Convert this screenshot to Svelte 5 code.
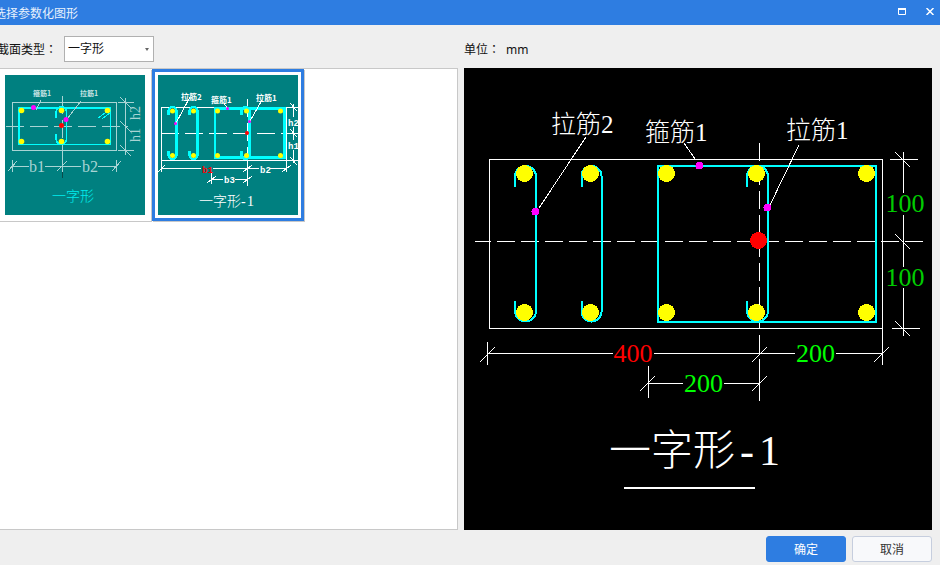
<script lang="ts">
  const balls = [524.5, 590.5, 666.5, 756.5, 866.5];
  const hooks = [[515, 536], [581.5, 601.5], [747, 768]];

  // dimension lines, in page pixels
  const dims = [
    [487.5, 342, 487.5, 365], [480, 362, 495, 347], [487, 353.5, 613, 353.5], [654, 353.5, 759, 353.5],
    [752, 362, 767, 347], [759, 353.5, 795, 353.5], [836, 353.5, 882, 353.5], [874, 362, 889, 347],
    [882.5, 328, 882.5, 365], [759.5, 359, 759.5, 401],
    [648.5, 366, 648.5, 398], [640, 391, 655, 376], [648, 383.5, 683, 383.5], [724, 383.5, 759, 383.5], [752, 391, 767, 376],
    [890, 159.5, 918, 159.5], [892, 328.5, 920, 328.5], [895, 152, 910, 167], [895, 234, 910, 249], [895, 321, 910, 336],
    [903.5, 152, 903.5, 193], [903.5, 215, 903.5, 267], [903.5, 288, 903.5, 336],
    [539, 208, 586, 137], [695, 159, 684, 143], [770, 205, 799, 145]
  ];

  const t1Dims = [
    [12.5, 160, 12.5, 172], [62.5, 160, 62.5, 172], [116.5, 160, 116.5, 172],
    [8, 171, 17, 161], [57, 171, 67, 161], [112, 171, 121, 161],
    [13, 166.5, 29, 166.5], [45, 166.5, 81, 166.5], [98, 166.5, 116, 166.5],
    [118, 102.5, 134, 102.5], [118, 150.5, 134, 150.5], [120, 97, 131, 108], [120, 121, 131, 132], [120, 145, 131, 156],
    [125.5, 98, 125.5, 155], [36, 110, 41, 100], [67, 119, 81, 101]
  ];

  const t2Dims = [
    [161.5, 160, 161.5, 172], [247.5, 160, 247.5, 186], [286.5, 160, 286.5, 172], [211.5, 172, 211.5, 184],
    [158, 172, 165, 165], [243, 172, 252, 165], [282, 172, 291, 165], [207, 183, 216, 176], [243, 183, 252, 176],
    [161, 168.5, 201, 168.5], [213, 168.5, 259, 168.5], [270, 168.5, 286, 168.5],
    [212, 179.5, 223, 179.5], [235, 179.5, 247, 179.5],
    [287, 107.5, 298, 107.5], [287, 160.5, 298, 160.5], [290, 103, 297, 111], [290, 129, 297, 137], [290, 157, 297, 165],
    [293.5, 104, 293.5, 117], [293.5, 127, 293.5, 140], [293.5, 150, 293.5, 163],
    [176, 123, 190, 97], [227, 108, 224, 103], [250, 121, 262, 100]
  ];
</script>

<div class="dialog">
  <header class="titlebar">
    <span class="title">选择参数化图形</span>
    <svg class="win-icon" viewBox="0 0 8 7" width="8" height="7"><path d="M.5 1.5h7v5h-7z" fill="none" stroke="#fff" /><path d="M0 0h8v2H0z" fill="#fff" /></svg>
    <svg class="win-icon" viewBox="0 0 8 7" width="8" height="7"><path d="M.5 0l7 7M7.5 0l-7 7" stroke="#fff" stroke-width="1.5" /></svg>
  </header>

  <div class="toolbar">
    <div class="type-field">
      <span>截面类型<span class="colon">：</span></span>
      <div class="select">一字形</div>
    </div>
    <div class="unit"><span>单位<span class="colon">：</span></span><span>mm</span></div>
  </div>

  <main class="body">
    <section class="list">
      <div class="cards">
        <div class="card">
          <svg class="thumb" viewBox="5 75 140 140" width="140" height="140" shape-rendering="crispEdges">
            <rect x="5" y="75" width="140" height="140" fill="#008080" />
            <rect x="12.5" y="102.5" width="104" height="48" fill="none" stroke="#a8d4d4" />
            <line x1="6" y1="126.5" x2="128" y2="126.5" stroke="#a8d4d4" stroke-dasharray="18 6" />
            <line x1="62.5" y1="96" x2="62.5" y2="160" stroke="#a8d4d4" stroke-dasharray="18 6" />
            <line x1="62.5" y1="172" x2="62.5" y2="178" stroke="#0a4a4a" />
            <rect x="19" y="108" width="91.5" height="36.5" fill="none" stroke="#0ff" stroke-width="1.5" />
            <path d="M56 118V112A5 5 0 0 1 66.5 112V139A5 5 0 0 1 56 139V134" fill="none" stroke="#0ff" stroke-width="1.5" />
            <path d="M98 118L109 110M102 119L110 113" stroke="#0ff" />
            {#each t1Dims as d}
              <line x1={d[0]} y1={d[1]} x2={d[2]} y2={d[3]} stroke="#a8d4d4" />
            {/each}
            {#each [21.5, 61.5, 107.5] as x}
              <circle cx={x} cy="110.5" r="2.8" fill="#ff0" />
              <circle cx={x} cy="141.5" r="2.8" fill="#ff0" />
            {/each}
            <circle cx="33.5" cy="107.5" r="2.5" fill="#f0f" />
            <circle cx="66" cy="119.5" r="2.5" fill="#f0f" />
            <circle cx="61.5" cy="125.5" r="2.5" fill="#f00" />
            <text class="thumb-label" x="33" y="96" fill="#c8e4e4">箍筋1</text>
            <text class="thumb-label" x="80" y="96" fill="#c8e4e4">拉筋1</text>
            <text class="cad" x="29" y="172" font-size="16" fill="#a8d4d4">b1</text>
            <text class="cad" x="82" y="172" font-size="16" fill="#a8d4d4">b2</text>
            <text class="cad" transform="translate(140 120) rotate(-90)" font-size="14" fill="#a8d4d4">h2</text>
            <text class="cad" transform="translate(140 142) rotate(-90)" font-size="14" fill="#a8d4d4">h1</text>
            <text class="cad" x="52" y="201" font-size="14" fill="#0ee">一字形</text>
          </svg>
        </div>

        <div class="card selected">
          <svg class="thumb" viewBox="158 75 140 140" width="140" height="140" shape-rendering="crispEdges">
            <rect x="158" y="75" width="140" height="140" fill="#008080" />
            <rect x="161.5" y="107.5" width="125" height="53" fill="none" stroke="#fff" />
            <line x1="161" y1="133.5" x2="298" y2="133.5" stroke="#fff" stroke-dasharray="18 6" />
            <line x1="247.5" y1="99" x2="247.5" y2="160" stroke="#fff" stroke-dasharray="18 6" />
            <rect x="215" y="108.5" width="69.5" height="49" fill="none" stroke="#0ff" stroke-width="2.5" />
            {#each [[168.5, 176.5], [189.5, 197.5], [241.5, 249.5]] as h}
              <path d="M{h[0]} 115V111A4 4 0 0 1 {h[1]} 111V155A4 4 0 0 1 {h[0]} 155V151" fill="none" stroke="#0ff" stroke-width="2.5" />
            {/each}
            {#each t2Dims as d}
              <line x1={d[0]} y1={d[1]} x2={d[2]} y2={d[3]} stroke="#fff" />
            {/each}
            {#each [172.5, 193.5, 217.5, 246.5, 280.5] as x}
              <circle cx={x} cy="111" r="2.5" fill="#ff0" />
              <circle cx={x} cy="155.5" r="2.5" fill="#ff0" />
            {/each}
            <circle cx="175.5" cy="123.5" r="1.5" fill="#f0f" />
            <circle cx="227.5" cy="108.5" r="1.5" fill="#f0f" />
            <circle cx="249.5" cy="121.5" r="1.5" fill="#f0f" />
            <circle cx="247" cy="133" r="2" fill="#f00" />
            <text class="thumb-label wide" x="181" y="100" fill="#fff">拉筋2</text>
            <text class="thumb-label wide" x="211" y="103" fill="#fff">箍筋1</text>
            <text class="thumb-label wide" x="256" y="101" fill="#fff">拉筋1</text>
            <text class="mono" x="202" y="173" fill="#f00">b1</text>
            <text class="mono" x="260" y="173" fill="#fff">b2</text>
            <text class="mono" x="224" y="183" fill="#fff">b3</text>
            <text class="mono" x="288" y="126" fill="#fff">h2</text>
            <text class="mono" x="288" y="149" fill="#fff">h1</text>
            <text class="cad" x="199 213 227 241 247" y="206" font-size="14" fill="#fff">一字形-1</text>
          </svg>
        </div>
      </div>
    </section>

    <section class="preview">
      <svg viewBox="464 68 468 462" width="468" height="462" shape-rendering="crispEdges">
        <rect x="464" y="68" width="468" height="462" fill="#000" />
        <rect x="489.5" y="159.5" width="393" height="169" fill="none" stroke="#fff" />
        <line x1="475" y1="241.5" x2="923" y2="241.5" stroke="#fff" stroke-dasharray="18 6" stroke-dashoffset="2" />
        <line x1="759.5" y1="143" x2="759.5" y2="353" stroke="#fff" stroke-dasharray="18 6" />

        <rect x="658" y="166" width="217.5" height="155.5" fill="none" stroke="#0ff" stroke-width="2" />
        {#each hooks as h}
          {@const r = (h[1] - h[0]) / 2}
          <path d="M{h[0]} 187V{166 + r}A{r} {r} 0 0 1 {h[1]} {166 + r}V{321.5 - r}A{r} {r} 0 0 1 {h[0]} {321.5 - r}V301" fill="none" stroke="#0ff" stroke-width="2" />
        {/each}

        {#each dims as d}
          <line x1={d[0]} y1={d[1]} x2={d[2]} y2={d[3]} stroke="#fff" />
        {/each}

        {#each balls as x}
          <circle cx={x} cy="173.5" r="8.5" fill="#ff0" />
          <circle cx={x} cy="312.5" r="8.5" fill="#ff0" />
        {/each}
        <circle cx="758.5" cy="240.5" r="8.5" fill="#f00" />
        <circle cx="535.5" cy="211.5" r="4" fill="#f0f" />
        <circle cx="699.5" cy="165.5" r="4" fill="#f0f" />
        <circle cx="767.5" cy="207.5" r="4" fill="#f0f" />

        <text class="cad" x="551" y="133" font-size="25" fill="#fff">拉筋2</text>
        <text class="cad" x="645" y="141" font-size="25" fill="#fff">箍筋1</text>
        <text class="cad" x="786" y="139" font-size="25" fill="#fff">拉筋1</text>

        <text class="cad" x="633" y="362" font-size="26" text-anchor="middle" fill="#f00">400</text>
        <text class="cad" x="815.5" y="362" font-size="26" text-anchor="middle" fill="#0f0">200</text>
        <text class="cad" x="703.5" y="392" font-size="26" text-anchor="middle" fill="#0f0">200</text>
        <text class="cad" x="905" y="212" font-size="26" text-anchor="middle" fill="#0c0">100</text>
        <text class="cad" x="905" y="286" font-size="26" text-anchor="middle" fill="#0c0">100</text>

        <text class="cad" x="609 651 693 740 759" y="465" font-size="42" fill="#fff">一字形-1</text>
        <rect x="624" y="487" width="131" height="2" fill="#fff" />
      </svg>
    </section>
  </main>

  <footer class="footer">
    <button class="btn primary">确定</button>
    <button class="btn">取消</button>
  </footer>
</div>

<style>
  :global(body) {
    overflow: hidden;
    background: #efefef;
  }
  .dialog {
    width: 946px;
    height: 565px;
    margin-left: -6px;
    display: flex;
    flex-direction: column;
    background: #efefef;
    font: 12px "Noto Sans", "Noto Sans CJK SC", sans-serif;
    color: #111;
  }
  .titlebar {
    height: 25px;
    flex: none;
    display: flex;
    align-items: center;
    gap: 20px;
    padding-right: 6px;
    background: #2e7de1;
    color: #e8f1fc;
  }
  .title { flex: 1; }
  .win-icon { display: block; margin-top: -2px; }
  .toolbar {
    height: 43px;
    flex: none;
    box-sizing: border-box;
    padding: 11px 14px 6px 3px;
    display: flex;
  }
  .type-field {
    width: 467px;
    display: flex;
    align-items: center;
    gap: 7px;
  }
  .colon { font-family: "Noto Sans CJK TC", sans-serif; }
  .select {
    position: relative;
    width: 90px;
    height: 26px;
    box-sizing: border-box;
    padding-left: 3px;
    line-height: 24px;
    background: #fff;
    border: 1px solid #b0b0b0;
  }
  .select::after {
    content: "";
    position: absolute;
    right: 4px;
    top: 11px;
    border: 2.5px solid transparent;
    border-top: 3px solid #666;
  }
  .unit {
    display: flex;
    align-items: center;
    gap: 6px;
  }
  .body {
    flex: 1;
    min-height: 0;
    display: flex;
    gap: 6px;
    padding-right: 8px;
  }
  .list {
    width: 464px;
    box-sizing: border-box;
    background: #fff;
    border: 1px solid #c8c8c8;
    padding-left: 4px;
  }
  .cards { display: flex; }
  .card {
    box-sizing: border-box;
    width: 152px;
    height: 152px;
    padding: 3px;
    margin-right: 1px;
    border: 3px solid transparent;
    box-shadow: 1px 1px 0 #c8c8c8;
  }
  .card.selected { border-color: #2e7de1; }
  .thumb, .preview svg { display: block; }
  .thumb circle { shape-rendering: auto; }
  .preview {
    width: 468px;
    background: #000;
  }
  .cad {
    font-family: "Liberation Serif", "Noto Sans CJK SC", serif;
    font-weight: 300;
  }
  .mono {
    font: 700 9px "Liberation Mono", monospace;
  }
  .thumb-label {
    font: 700 7px "Noto Sans CJK SC", sans-serif;
  }
  .thumb-label.wide { font-size: 8px; }
  .footer {
    height: 35px;
    flex: none;
    box-sizing: border-box;
    padding: 6px 8px 3px 0;
    display: flex;
    justify-content: flex-end;
    gap: 6px;
  }
  .btn {
    width: 80px;
    height: 26px;
    padding: 0;
    font: inherit;
    color: #333;
    background: #f8f9fb;
    border: 1px solid #c6cede;
    border-radius: 3px;
  }
  .btn.primary {
    color: #fff;
    background: #2e7de1;
    border-color: #2e7de1;
  }
</style>
